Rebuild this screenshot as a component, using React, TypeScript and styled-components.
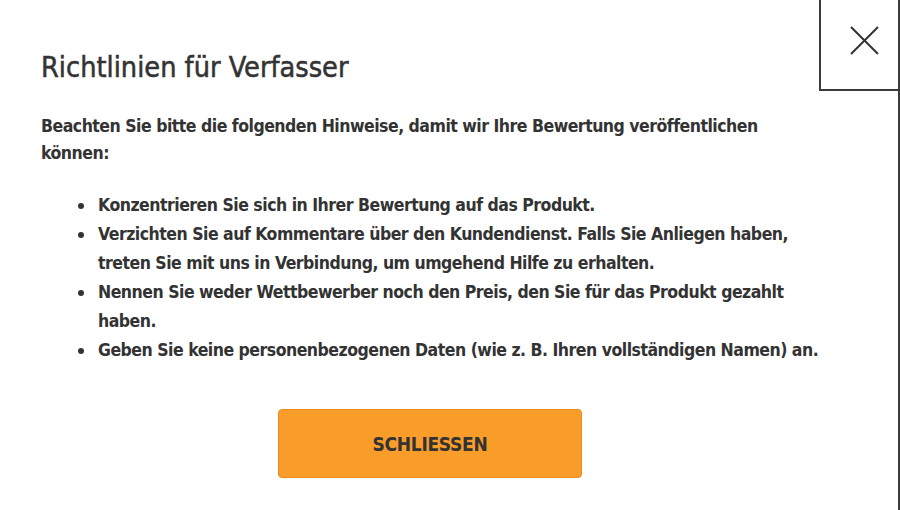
import * as React from 'react';
import styled, { createGlobalStyle } from 'styled-components';

const GlobalStyle = createGlobalStyle`
    html, body {
        margin: 0;
        padding: 0;
        background: #fff;
    }

    body {
        font-family: 'DejaVu Sans Condensed', 'Liberation Sans Narrow', 'Liberation Sans', sans-serif;
        color: #333;
    }
`;

const Modal = styled.div`
    position: relative;
    box-sizing: border-box;
    width: 900px;
    height: 510px;
    border-right: 2px solid #3a3a3a;
    background: #fff;
`;

const CloseButton = styled.button`
    position: absolute;
    top: -2px;
    right: -2px;
    box-sizing: border-box;
    width: 81px;
    height: 93px;
    display: flex;
    align-items: center;
    justify-content: center;
    padding: 0 0 8px 9px;
    border: 2px solid #3a3a3a;
    background: #fff;
    cursor: pointer;

    & svg {
        width: 29px;
        height: 29px;
    }
`;

const Content = styled.div`
    display: flex;
    flex-direction: column;
    padding: 47px 44px 0 41px;
`;

const Title = styled.h2`
    margin: 0 0 26px;
    font-size: 28.6px;
    font-weight: 400;
    line-height: 40px;
    color: #333;
    -webkit-text-stroke: 0.5px #333;
`;

const Intro = styled.p`
    margin: 0 0 24px;
    max-width: 762px;
    font-size: 17.5px;
    font-weight: 700;
    letter-spacing: -0.5px;
    line-height: 27px;
`;

const List = styled.ul`
    margin: 0 0 0 37px;
    padding: 0;
    max-width: 744px;
    list-style: none;
    font-size: 17.5px;
    font-weight: 700;
    letter-spacing: -0.5px;
    line-height: 29px;
`;

const Item = styled.li`
    display: grid;
    grid-template-columns: 20px 1fr;

    &::before {
        content: '';
        width: 6px;
        height: 6px;
        margin-top: 12px;
        border-radius: 50%;
        background: #333;
    }
`;

const Actions = styled.div`
    display: flex;
    justify-content: center;
    padding-top: 44px;
    padding-right: 35px;
`;

const PrimaryButton = styled.button`
    box-sizing: border-box;
    width: 304px;
    height: 69px;
    border: 1px solid #f08a1c;
    border-radius: 4px;
    background: #f89c2a;
    color: #333;
    font-family: inherit;
    font-size: 19px;
    font-weight: 700;
    letter-spacing: -0.3px;
    cursor: pointer;
`;

const guidelines = [
    'Konzentrieren Sie sich in Ihrer Bewertung auf das Produkt.',
    'Verzichten Sie auf Kommentare über den Kundendienst. Falls Sie Anliegen haben, treten Sie mit uns in Verbindung, um umgehend Hilfe zu erhalten.',
    'Nennen Sie weder Wettbewerber noch den Preis, den Sie für das Produkt gezahlt haben.',
    'Geben Sie keine personenbezogenen Daten (wie z. B. Ihren vollständigen Namen) an.',
];

const App: React.FC = () => {
    return (
        <>
            <GlobalStyle />
            <Modal>
                <CloseButton aria-label="Schließen">
                    <svg viewBox="0 0 29 29" fill="none" stroke="#333" strokeWidth="2">
                        <path d="M1 1L28 28M28 1L1 28" />
                    </svg>
                </CloseButton>
                <Content>
                    <Title>Richtlinien für Verfasser</Title>
                    <Intro>
                        Beachten Sie bitte die folgenden Hinweise, damit wir Ihre Bewertung veröffentlichen
                        können:
                    </Intro>
                    <List>
                        {guidelines.map((item) => (
                            <Item key={item}>{item}</Item>
                        ))}
                    </List>
                    <Actions>
                        <PrimaryButton>SCHLIESSEN</PrimaryButton>
                    </Actions>
                </Content>
            </Modal>
        </>
    );
};

export default App;
